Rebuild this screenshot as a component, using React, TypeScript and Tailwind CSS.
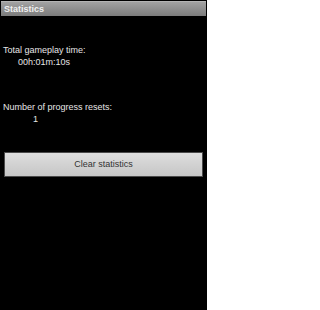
import React from "react";

export default function App() {
  return (
    <div
      className="w-[207px] h-[310px] bg-black overflow-hidden"
      style={{ fontFamily: '"Liberation Sans", Arial, sans-serif' }}
    >
      <div className="ml-[1px] mr-[1px] mt-[1px] h-[15px] flex items-center px-[3px] bg-gradient-to-b from-[#a2a2a2] to-[#7c7c7c] border-t border-[#b4b4b4]">
        <span className="text-[9px] font-bold text-[#f0f0f0] leading-[11px]">Statistics</span>
      </div>
      <div className="pl-[3px] pt-[28px] text-[9px] leading-[12px] text-[#e6e6e6]">
        <div>Total gameplay time:</div>
        <div className="pl-[15px]">00h:01m:10s</div>
        <div className="mt-[33px]">Number of progress resets:</div>
        <div className="pl-[30px]">1</div>
      </div>
      <div className="mx-[4px] mt-[27px] h-[25px] border border-[#4a4a4a] bg-gradient-to-b from-[#dedede] to-[#c6c6c6] flex items-center justify-center">
        <span className="text-[9px] leading-[11px] text-[#333333]">Clear statistics</span>
      </div>
    </div>
  );
}
